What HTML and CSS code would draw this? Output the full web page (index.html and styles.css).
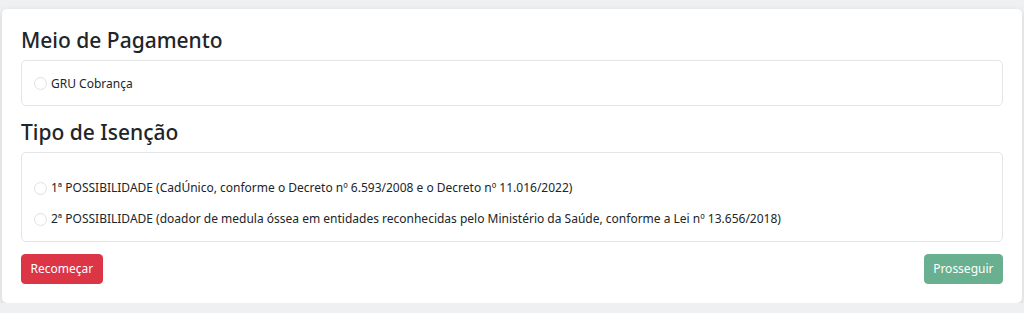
FILE: index.html
```html
<!DOCTYPE html>
<html lang="pt-BR">
<head>
<meta charset="utf-8">
<title>Meio de Pagamento</title>
<link rel="stylesheet" href="styles.css">
</head>
<body>
<main class="card">
  <h2 class="section-title">Meio de Pagamento</h2>
  <div class="box box-pay">
    <label class="option"><span class="radio"></span>GRU Cobrança</label>
  </div>
  <h2 class="section-title">Tipo de Isenção</h2>
  <div class="box box-exempt">
    <label class="option"><span class="radio"></span>1ª POSSIBILIDADE (CadÚnico, conforme o Decreto nº 6.593/2008 e o Decreto nº 11.016/2022)</label>
    <label class="option"><span class="radio"></span>2ª POSSIBILIDADE (doador de medula óssea em entidades reconhecidas pelo Ministério da Saúde, conforme a Lei nº 13.656/2018)</label>
  </div>
  <div class="actions">
    <button class="btn btn-danger" type="button">Recomeçar</button>
    <button class="btn btn-success" type="button" disabled>Prosseguir</button>
  </div>
</main>
</body>
</html>
```

FILE: styles.css
```css
* { box-sizing: border-box; }
html, body { margin: 0; }
body {
  background: #eef0f2;
  font-family: "Noto Sans", "Open Sans", sans-serif;
  color: #212529;
  padding: 9px 2px 0 2px;
}
.card {
  background: #fff;
  border-radius: 5px;
  box-shadow: 0 2px 6px rgba(0,0,0,0.12);
  padding: 15px 19px 19px 19px;
  width: 1020px;
}
.section-title {
  font-size: 21px;
  font-weight: 500;
  margin: 0 0 4px 0;
  line-height: 32px;
  color: #212529;
}
.box {
  border: 1px solid #e3e6e9;
  border-radius: 5px;
  padding: 0 12px;
  margin-bottom: 10px;
}
.box-pay { padding-top: 13px; padding-bottom: 12px; }
.box-exempt { padding-top: 26px; padding-bottom: 8px; margin-bottom: 12px; }
.option {
  display: flex;
  align-items: center;
  font-size: 12px;
  line-height: 18px;
  color: #212529;
}
.box-pay .option { line-height: 19px; }
.box-exempt .option { margin-bottom: 13px; }
.box-exempt .option:last-child { margin-bottom: 5px; }
.radio {
  width: 13px;
  height: 13px;
  border: 1px solid #dee2e6;
  border-radius: 50%;
  margin-right: 4px;
  flex: none;
}
.actions {
  display: flex;
  justify-content: space-between;
}
.btn {
  font-family: inherit;
  font-size: 12px;
  line-height: 18px;
  border: 1px solid transparent;
  border-radius: 4px;
  padding: 5px 8.5px;
  color: #fff;
  height: 30px;
}
.btn-danger { background: #dc3545; border-color: #dc3545; }
.btn-success { background: #198754; border-color: #198754; opacity: 0.65; }
```
